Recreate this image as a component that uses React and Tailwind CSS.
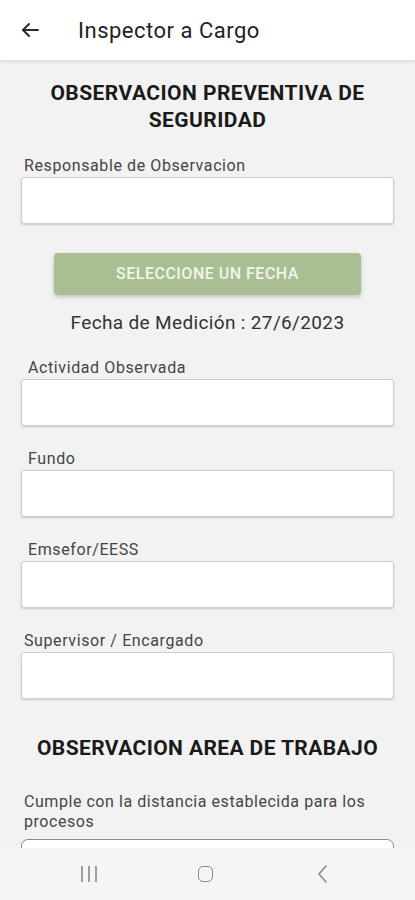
import React from "react";

function Field({ label, labelPad = "pl-[7px]", mt = "mt-[23px]" }) {
  return (
    <div className={mt}>
      <div className={`${labelPad} text-[16px] leading-[20px] tracking-[0.6px] text-[#454545]`}>{label}</div>
      <div className="mt-[1px] h-[47px] rounded-[3px] border border-[#cfcfcf] bg-white shadow-[0_1px_2px_rgba(0,0,0,0.18)]" />
    </div>
  );
}

export default function App() {
  return (
    <div className="w-[415px] h-[900px] bg-[#f2f2f2] flex flex-col overflow-hidden" style={{ fontFamily: "Roboto, 'Noto Sans', sans-serif" }}>
      <div className="h-[60px] shrink-0 bg-white flex items-center shadow-[0_2px_4px_rgba(0,0,0,0.10)] relative z-10">
        <svg className="ml-[21px]" width="18" height="16" viewBox="0 0 18 16" fill="none" stroke="#2a2a2a" strokeWidth="2" strokeLinecap="round" strokeLinejoin="round">
          <path d="M17 8H2" />
          <path d="M8 2L2 8l6 6" />
        </svg>
        <div className="ml-[39px] text-[22px] tracking-[0.5px] text-[#222] leading-none pt-[2px]">Inspector a Cargo</div>
      </div>
      <div className="flex-1 overflow-hidden px-[21px]">
        <div className="pt-[20px] text-center font-bold text-[21px] tracking-[0.45px] leading-[27px] text-[#1a1a1a]">
          OBSERVACION PREVENTIVA DE
          <br />
          SEGURIDAD
        </div>
        <Field label="Responsable de Observacion" labelPad="pl-[3px]" mt="mt-[22px]" />
        <div className="mx-[33px] mt-[29px] h-[42px] rounded-[4px] bg-[#a9bf93] flex items-center justify-center shadow-[0_2px_4px_rgba(0,0,0,0.2)]">
          <span className="text-[16px] font-medium text-[#f1f5ea] tracking-[0.5px]">SELECCIONE UN FECHA</span>
        </div>
        <div className="mt-[16px] text-center text-[19px] tracking-[0.35px] leading-[24px] text-[#333]">Fecha de Medición : 27/6/2023</div>
        <Field label="Actividad Observada" />
        <Field label="Fundo" />
        <Field label="Emsefor/EESS" />
        <Field label="Supervisor / Encargado" labelPad="pl-[3px]" />
        <div className="mt-[36px] text-center font-bold text-[21px] tracking-[0.4px] leading-[27px] text-[#1a1a1a]">OBSERVACION AREA DE TRABAJO</div>
        <div className="mt-[30px] pl-[3px] text-[16px] tracking-[0.55px] leading-[20px] text-[#454545]">
          Cumple con la distancia establecida para los
          <br />
          procesos
        </div>
        <div className="mt-[7px] h-[40px] rounded-t-[7px] border border-[#8a8a8a] bg-white" />
      </div>
      <div className="h-[52px] shrink-0 bg-[#f5f5f5] flex items-center justify-center pr-[4px] relative z-10">
        <div className="w-[117px] flex justify-center">
          <svg width="18" height="16" viewBox="0 0 18 16" stroke="#8a8a8a" strokeWidth="1.6">
            <path d="M2 0v16M9 0v16M16 0v16" />
          </svg>
        </div>
        <div className="w-[117px] flex justify-center pb-[1px]">
          <div className="w-[15px] h-[16px] rounded-[5px] border-[1.8px] border-[#8a8a8a]" />
        </div>
        <div className="w-[117px] flex justify-center">
          <svg width="12" height="20" viewBox="0 0 12 20" fill="none" stroke="#8a8a8a" strokeWidth="1.6" strokeLinecap="round" strokeLinejoin="round">
            <path d="M9 2L2 10l7 8" />
          </svg>
        </div>
      </div>
    </div>
  );
}
